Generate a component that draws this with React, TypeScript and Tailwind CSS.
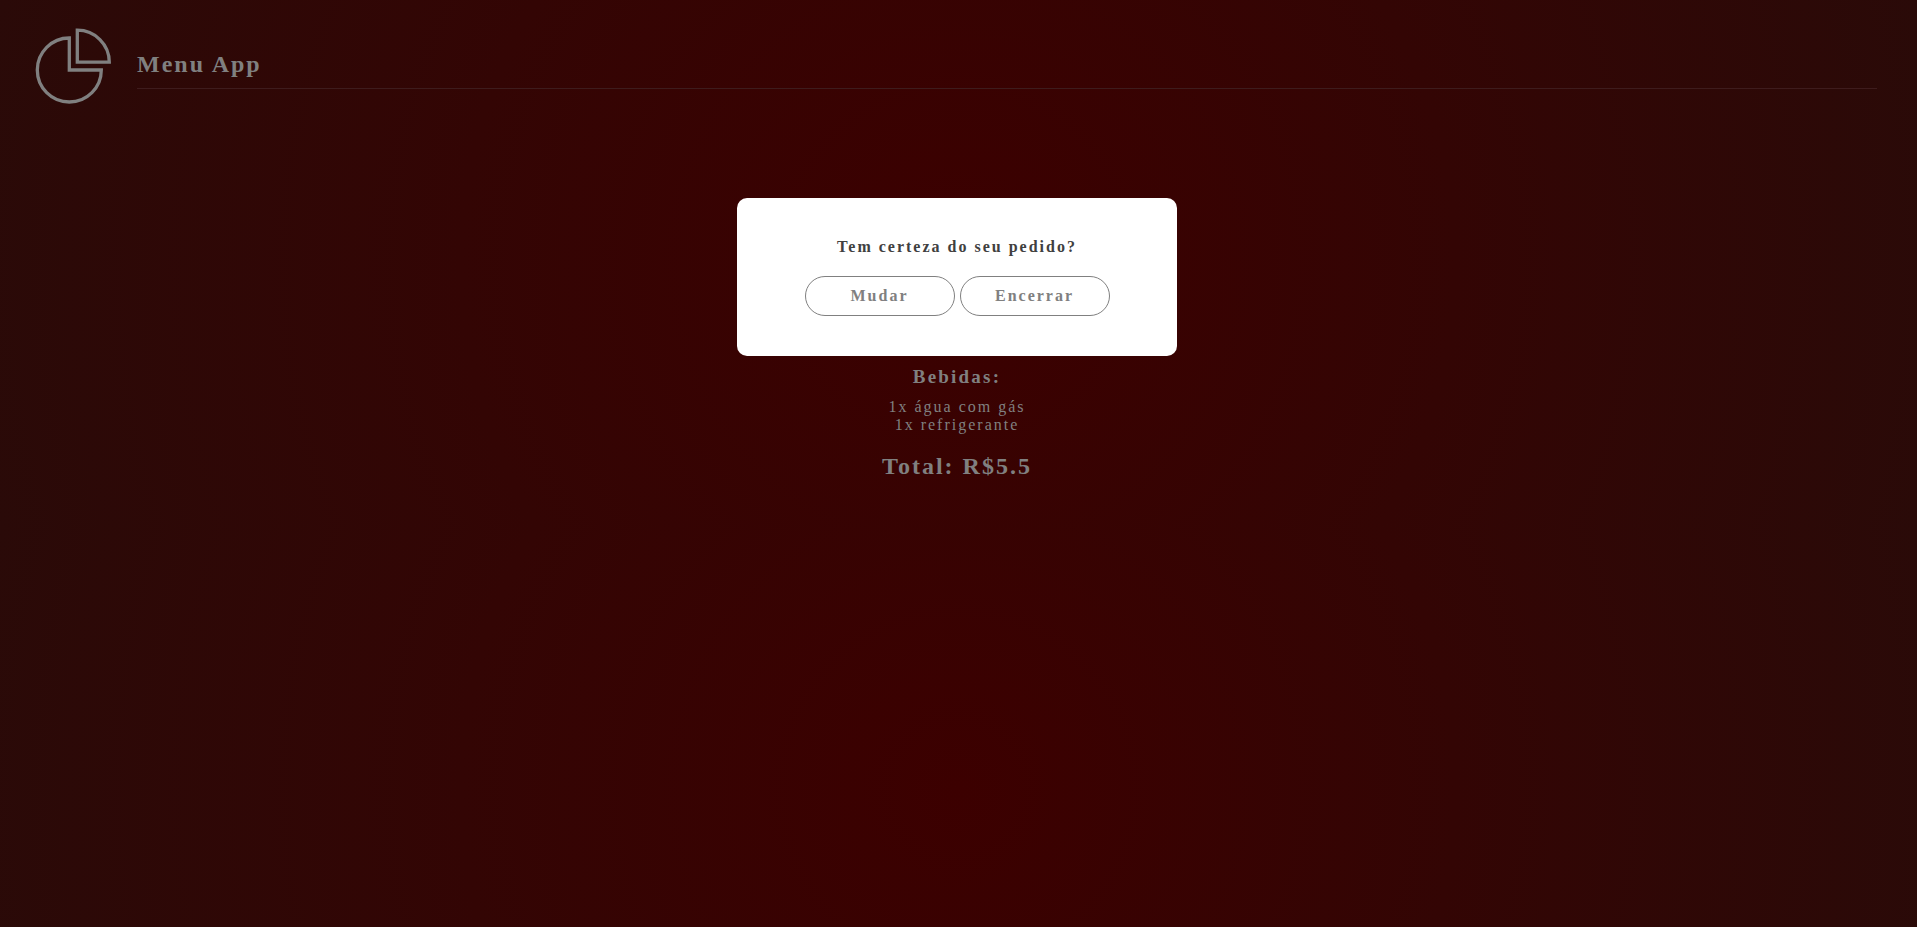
export default function App() {
  return (
    <div className="relative h-[927px] w-full overflow-hidden bg-[radial-gradient(circle,#3c0000,#2a0a08)] bg-[length:100%_526px] font-['Liberation_Serif',serif] tracking-[2px] text-[#808080]">
      <header className="flex h-[110px] pl-[35px] pr-10 pt-7">
        <svg width="77" height="77" viewBox="0 0 77 77" fill="none" stroke="#808080" strokeWidth="3.3">
          <path d="M34.300 10A32 32 0 1 0 66.300 42H34.300Z" />
          <path d="M42.300 2.200V34.200H74.300A32 32 0 0 0 42.300 2.200Z" />
        </svg>
        <div className="ml-[25px] flex h-[61px] flex-1 items-end border-b border-[#3e1c1d]">
          <h1 className="mb-[10px] text-2xl font-bold leading-7">Menu App</h1>
        </div>
      </header>
      <main className="flex flex-col items-center pr-[3px] pt-[256px]">
        <h2 className="text-[19px] font-bold leading-[22px] tracking-[2.2px]">Bebidas:</h2>
        <p className="mt-[10px] text-base leading-[18px]">1x água com gás</p>
        <p className="text-base leading-[18px]">1x refrigerante</p>
        <h2 className="mt-[18px] text-2xl font-bold leading-7">Total: R$5.5</h2>
      </main>
      <div className="absolute inset-0 flex items-start justify-center pr-[3px] pt-[198px]">
        <section className="flex h-[158px] w-[440px] flex-col items-center rounded-[10px] bg-white pt-10">
          <h3 className="text-base font-bold leading-[18px] text-[#404040]">Tem certeza do seu pedido?</h3>
          <div className="mt-5 flex gap-[5px]">
            <button className="h-10 w-[150px] rounded-[20px] border border-[#808080] text-base font-bold tracking-[2px]">Mudar</button>
            <button className="h-10 w-[150px] rounded-[20px] border border-[#808080] text-base font-bold tracking-[2px]">Encerrar</button>
          </div>
        </section>
      </div>
    </div>
  );
}
